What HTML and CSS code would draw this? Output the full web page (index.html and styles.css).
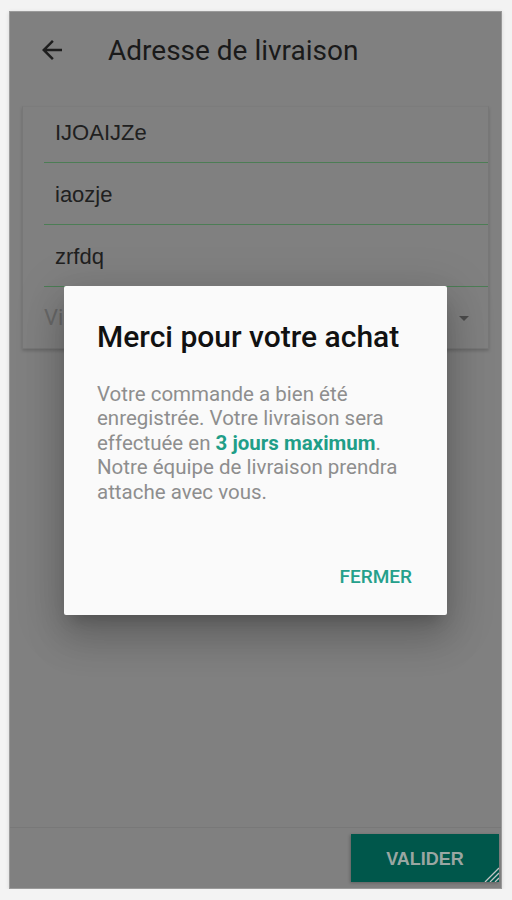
FILE: index.html
```html
<!DOCTYPE html>
<html lang="fr">
<head>
    <meta charset="UTF-8">
    <meta name="viewport" content="width=device-width, initial-scale=1.0">
    <title>Adresse de livraison</title>
    <link rel="stylesheet" href="styles.css">
</head>
<body>
    <div class="phone">
        <div class="app-header">
            <svg class="back-icon" viewBox="0 0 24 24" width="30" height="30">
                <path d="M20 11H7.83l5.59-5.59L12 4l-8 8 8 8 1.41-1.41L7.83 13H20v-2z"/>
            </svg>
            <div class="app-title">Adresse de livraison</div>
        </div>

        <div class="address-card">
            <div class="field"><span class="field-value">IJOAIJZe</span></div>
            <div class="field"><span class="field-value">iaozje</span></div>
            <div class="field"><span class="field-value">zrfdq</span></div>
            <div class="select-row">
                <span class="select-value">Ville</span>
                <svg class="drop-icon" viewBox="0 0 24 24" width="24" height="24">
                    <path d="M7 10l5 5 5-5z"/>
                </svg>
            </div>
        </div>

        <div class="app-footer">
            <div class="validate-btn">
                VALIDER
                <svg class="resize-grip" viewBox="0 0 16 16" width="16" height="16">
                    <path d="M16 2L2 16M16 7L7 16M16 12L12 16"/>
                </svg>
            </div>
        </div>

        <div class="dialog-backdrop">
            <div class="dialog">
                <div class="dialog-title">Merci pour votre achat</div>
                <p class="dialog-text">
                    Votre commande a bien été enregistrée. Votre livraison sera
                    effectuée en <strong>3 jours maximum</strong>.
                    Notre équipe de livraison prendra attache avec vous.
                </p>
                <div class="dialog-actions">
                    <span class="dialog-btn">Fermer</span>
                </div>
            </div>
        </div>
    </div>
</body>
</html>
```

FILE: styles.css
```css
* {
    margin: 0;
    padding: 0;
    box-sizing: border-box;
}

body {
    background-color: #f3f3f3;
    font-family: Roboto, 'Noto Sans', sans-serif;
    padding: 11px 10px 0 9px;
}

/* Dimmed app screen (behind the dialog) */
.phone {
    position: relative;
    height: 878px;
    background-color: #808080;
    border: 1px solid #9a9a9a;
    box-shadow: 0 1px 4px rgba(0,0,0,0.12);
    display: flex;
    flex-direction: column;
}

.app-header {
    display: flex;
    align-items: center;
    height: 76px;
    padding-left: 27px;
}

.back-icon {
    fill: #1e1e1e;
    margin-right: 41px;
}

.app-title {
    font-size: 28px;
    color: #1a1a1a;
}

.address-card {
    margin: 18px 12px 0 12px;
    border: 1px solid #777;
    border-top-color: #7c7c7c;
    box-shadow: 0 2px 3px rgba(0,0,0,0.18);
}

.field {
    display: flex;
    align-items: flex-end;
    height: 62px;
    margin-left: 21px;
    padding: 0 0 16px 11px;
    border-bottom: 1px solid #4c7d55;
}

.field:first-child {
    height: 56px;
}

.field-value {
    font-family: 'Liberation Sans', Arial, sans-serif;
    font-size: 22px;
    color: #202020;
}

.select-row {
    display: flex;
    align-items: center;
    justify-content: space-between;
    height: 61px;
    padding: 0 12px 0 21px;
}

.select-value {
    font-size: 22px;
    color: #686868;
}

.drop-icon {
    fill: #4c4c4c;
}

.app-footer {
    margin-top: auto;
    height: 61px;
    border-top: 1px solid #787878;
    display: flex;
    justify-content: flex-end;
    align-items: flex-start;
    padding: 6px 2px 0 0;
}

.validate-btn {
    position: relative;
    width: 148px;
    height: 48px;
    background-color: #00574b;
    box-shadow: -1px 1px 3px rgba(0,0,0,0.25);
    display: flex;
    align-items: center;
    justify-content: center;
    padding-top: 2px;
    font-family: 'Liberation Sans', Arial, sans-serif;
    font-weight: bold;
    font-size: 18px;
    color: #9aa6a2;
}

.resize-grip {
    position: absolute;
    right: 0;
    bottom: 0;
    stroke: #c4c4c4;
    stroke-width: 1.3;
}

/* Dialog */
.dialog-backdrop {
    position: absolute;
    top: 0;
    left: 0;
    right: 0;
    bottom: 0;
    display: flex;
    align-items: center;
    justify-content: center;
}

.dialog {
    width: 383px;
    height: 329px;
    background-color: #fafafa;
    border-radius: 2px;
    padding: 36px 35px 0 33px;
    box-shadow: 0 11px 15px -7px rgba(0,0,0,0.2),
                0 24px 38px 3px rgba(0,0,0,0.14),
                0 9px 46px 8px rgba(0,0,0,0.12);
    display: flex;
    flex-direction: column;
}

.dialog-title {
    font-size: 30px;
    font-weight: 500;
    color: #111;
    line-height: 30px;
}

.dialog-text {
    margin-top: 30px;
    font-size: 20.5px;
    line-height: 24.5px;
    color: #8e8e8e;
}

.dialog-text strong {
    color: #1f9e88;
    font-weight: bold;
}

.dialog-actions {
    margin-top: auto;
    height: 50px;
    display: flex;
    justify-content: flex-end;
}

.dialog-btn {
    font-size: 19px;
    font-weight: 500;
    text-transform: uppercase;
    color: #25a08b;
}
```
